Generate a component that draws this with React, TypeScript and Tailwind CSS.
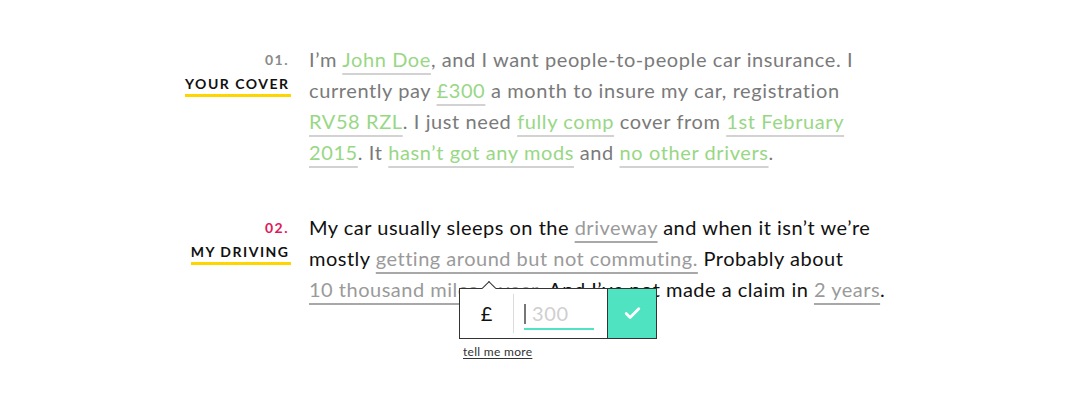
import React from "react";
import { Check } from "lucide-react";

const G = ({ children }: { children: React.ReactNode }) => (
  <span className="text-[#98d785] underline decoration-[#d2d2d2] decoration-[1.5px] underline-offset-[6px]">
    {children}
  </span>
);

const D = ({ children }: { children: React.ReactNode }) => (
  <span className="text-[#9a9a9a] underline decoration-[#a8a8a8] decoration-[1.5px] underline-offset-[6px]">
    {children}
  </span>
);

function Label({ num, title, numColor }: { num: string; title: string; numColor: string }) {
  return (
    <div className="w-[289px] shrink-0 flex flex-col items-end pt-[6px] font-bold text-[14px] leading-[20px] tracking-[1.5px]">
      <span className={numColor}>{num}</span>
      <span className="mt-[4px] text-[#111] border-b-[3px] border-[#ffd500] mr-[-1.5px] pr-[1px]">{title}</span>
    </div>
  );
}

export default function App() {
  return (
    <div className="w-[1085px] h-[404px] bg-white pt-[44px] font-['Lato',sans-serif] overflow-hidden">
      <section className="flex">
        <Label num="01." title="YOUR COVER" numColor="text-[#8a8a8a]" />
        <div className="ml-5 text-[20px] leading-[31px] tracking-[0.6px] text-[#7a7a7a] whitespace-nowrap">
          I’m <G>John Doe</G>, and I want people-to-people car insurance. I
          <br />
          currently pay <G>£300</G> a month to insure my car, registration
          <br />
          <G>RV58 RZL</G>. I just need <G>fully comp</G> cover from <G>1st February</G>
          <br />
          <G>2015</G>. It <G>hasn’t got any mods</G> and <G>no other drivers</G>.
        </div>
      </section>

      <section className="flex mt-[44px]">
        <Label num="02." title="MY DRIVING" numColor="text-[#e0195a]" />
        <div className="relative ml-5 text-[20px] leading-[31px] tracking-[0.5px] text-[#111] whitespace-nowrap">
          My car usually sleeps on the <D>driveway</D> and when it isn’t we’re
          <br />
          mostly <D>getting around but not commuting.</D> Probably about
          <br />
          <D>10 thousand miles a year</D>. And I’ve not made a claim in <D>2 years</D>.

          <div className="absolute left-[150px] top-[76px] tracking-normal">
            <div className="relative flex w-[198px] h-[51px] bg-white border border-[#333]">
              <div className="absolute left-[24px] top-[-6px] w-[10px] h-[10px] bg-white border-l border-t border-[#333] rotate-45" />
              <div className="relative w-[53px] flex items-center justify-center text-[20px] text-[#111]">£</div>
              <div className="w-px bg-[#dcdcdc] my-[5px]" />
              <div className="relative flex-1 flex items-center pl-[10px]">
                <div className="flex items-center w-[70px] h-[30px] border-b-2 border-[#50e3c2] mt-[2px]">
                  <span className="w-[2px] h-[20px] bg-[#777]" />
                  <span className="ml-[6px] text-[20px] tracking-[0.6px] text-[#cfcfcf]">300</span>
                </div>
              </div>
              <div className="w-[50px] -my-px -mr-px bg-[#50e3c2] border border-[#333] flex items-center justify-center">
                <Check size={19} strokeWidth={3.5} color="#ffffff" />
              </div>
            </div>
            <div className="mt-[6px] ml-[4px] text-[12px] leading-[14px] tracking-[0.3px] text-[#333] underline underline-offset-2">
              tell me more
            </div>
          </div>
        </div>
      </section>
    </div>
  );
}
